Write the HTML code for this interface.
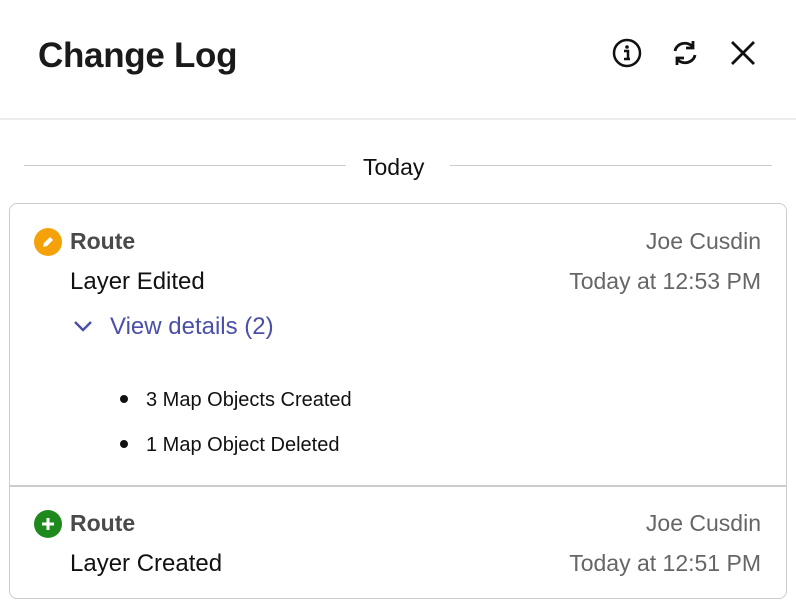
<!DOCTYPE html>
<html><head><style>
body{margin:0;width:796px;height:608px;background:#fff;font-family:"Liberation Sans",sans-serif;position:relative;overflow:hidden}
.a{position:absolute;white-space:nowrap}
</style></head><body>
<div class="a" style="left:38px;top:36px;font-size:35px;font-weight:bold;color:#1a1a1a;letter-spacing:-0.3px">Change Log</div>
<svg class="a" style="left:610px;top:36px" width="34" height="34" viewBox="0 0 34 34"><circle cx="17" cy="17" r="13" fill="none" stroke="#111" stroke-width="2.5"/><circle cx="17" cy="11" r="1.8" fill="#111"/><path d="M14 15h4v8M14 23h6" stroke="#111" stroke-width="2.5" fill="none"/></svg>
<svg class="a" style="left:668px;top:36px" width="34" height="34" viewBox="0 0 34 34" fill="none" stroke="#111" stroke-width="2.8"><path d="M7 15a10 9 0 0 1 18-4"/><path d="M25 5v7h-7"/><path d="M27 19a10 9 0 0 1-18 4"/><path d="M9 29v-7h7"/></svg>
<svg class="a" style="left:728px;top:38px" width="30" height="30" viewBox="0 0 30 30" stroke="#111" stroke-width="2.8"><path d="M4 4L26 26M26 4L4 26"/></svg>
<div class="a" style="left:0;top:118px;width:796px;height:2px;background:#ececec"></div>
<div class="a" style="left:24px;top:165px;width:322px;height:1px;background:#ccc"></div>
<div class="a" style="left:450px;top:165px;width:322px;height:1px;background:#ccc"></div>
<div class="a" style="left:363px;top:154px;font-size:23px;color:#111">Today</div>
<div class="a" style="left:9px;top:203px;width:776px;height:394px;border:1.5px solid #ccc;border-radius:8px"></div>
<div class="a" style="left:10px;top:485px;width:776px;height:1.5px;background:#ccc"></div>
<svg class="a" style="left:34px;top:228px" width="28" height="28" viewBox="0 0 28 28"><circle cx="14" cy="14" r="14" fill="#f5a20a"/><path d="M9 19l1-4 6-6 3 3-6 6z" fill="#fff"/></svg>
<div class="a" style="left:70px;top:228px;font-size:23px;font-weight:bold;color:#4a4a4a">Route</div>
<div class="a" style="left:70px;top:268px;font-size:24px;color:#111">Layer Edited</div>
<div class="a" style="right:35px;top:228px;font-size:23px;color:#666">Joe Cusdin</div>
<div class="a" style="right:35px;top:268px;font-size:23px;color:#666">Today at 12:53 PM</div>
<svg class="a" style="left:72px;top:318px" width="22" height="16" viewBox="0 0 22 16"><path d="M3 4l8 8 8-8" fill="none" stroke="#4a4fa8" stroke-width="2.4"/></svg>
<div class="a" style="left:110px;top:313px;font-size:24px;color:#4a4fa8">View details (2)</div>
<div class="a" style="left:120px;top:395px;width:8px;height:8px;border-radius:50%;background:#111"></div>
<div class="a" style="left:146px;top:389px;font-size:20px;color:#111">3 Map Objects Created</div>
<div class="a" style="left:120px;top:440px;width:8px;height:8px;border-radius:50%;background:#111"></div>
<div class="a" style="left:146px;top:434px;font-size:20px;color:#111">1 Map Object Deleted</div>
<svg class="a" style="left:34px;top:510px" width="28" height="28" viewBox="0 0 28 28"><circle cx="14" cy="14" r="14" fill="#1e8a1e"/><path d="M14 8v12M8 14h12" stroke="#fff" stroke-width="3"/></svg>
<div class="a" style="left:70px;top:510px;font-size:23px;font-weight:bold;color:#4a4a4a">Route</div>
<div class="a" style="left:70px;top:550px;font-size:24px;color:#111">Layer Created</div>
<div class="a" style="right:35px;top:510px;font-size:23px;color:#666">Joe Cusdin</div>
<div class="a" style="right:35px;top:550px;font-size:23px;color:#666">Today at 12:51 PM</div>
</body></html>
